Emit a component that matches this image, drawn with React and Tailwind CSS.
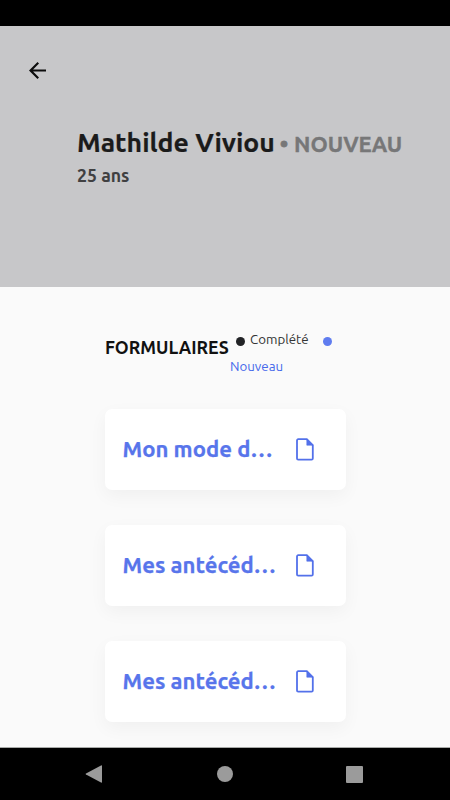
const forms = [
  { id: 1, label: 'Mon mode d…' },
  { id: 2, label: 'Mes antécéd…' },
  { id: 3, label: 'Mes antécéd…' },
];

function BackIcon() {
  return (
    <svg viewBox="4 4 16 16" className="h-[17px] w-[17px]" fill="#0c0c0c">
      <path d="M20 11H7.83l5.59-5.59L12 4l-8 8 8 8 1.41-1.41L7.83 13H20z" />
    </svg>
  );
}

function FileIcon() {
  return (
    <svg viewBox="0 0 18 23" className="h-[23px] w-[18px] shrink-0" fill="none" stroke="#5371ea" strokeWidth="1.8">
      <path d="M2.2 1.2h8.6l6 6v13.2a1.2 1.2 0 0 1-1.2 1.2H2.2A1.2 1.2 0 0 1 1 20.4V2.4a1.2 1.2 0 0 1 1.2-1.2z" />
      <path d="M10.8 1.2v6h6z" fill="#5371ea" strokeWidth="0.6" />
    </svg>
  );
}

function FormCard({ form }) {
  return (
    <button className="flex h-[81px] w-[241px] items-center rounded-[7px] bg-white pl-[17.5px] text-left shadow-[0_6px_18px_rgba(0,0,0,0.045)]">
      <span className="w-[173.5px] whitespace-nowrap pb-px text-[22.1px] font-bold text-[#5875eb] [-webkit-text-stroke:0.25px_#5875eb]">
        {form.label}
      </span>
      <FileIcon />
    </button>
  );
}

export default function App() {
  return (
    <div className="flex h-[800px] w-[450px] flex-col overflow-hidden bg-[#fafafa] font-['Ubuntu','Noto_Sans',sans-serif]">
      <div className="h-[26px] shrink-0 bg-black" />

      <header className="h-[261px] shrink-0 bg-[#c7c7c9] pt-9">
        <button className="ml-[29px] block">
          <BackIcon />
        </button>
        <div className="mt-[45px] flex items-baseline whitespace-nowrap pl-[77px]">
          <h1 className="w-[203px] text-[26.6px] leading-9 font-semibold text-[#1b1b1b] [-webkit-text-stroke:0.2px_#1b1b1b]">
            Mathilde Viviou
          </h1>
          <span className="w-[14px] text-[22px] font-bold text-[#777778] [-webkit-text-stroke:0.8px_#777778]">•</span>
          <span className="text-[22px] font-bold text-[#777778] [-webkit-text-stroke:0.35px_#777778]">NOUVEAU</span>
        </div>
        <p className="pl-[77px] text-[17.7px] leading-[32px] font-semibold text-[#404041]">25 ans</p>
      </header>

      <main className="flex min-h-0 grow flex-col pl-[105px]">
        <div className="flex h-[122px] items-center">
          <h2 className="w-[125px] whitespace-nowrap text-[17.7px] font-bold text-[#111]">FORMULAIRES</h2>
          <div className="pt-[10px] text-[13.3px] leading-[27px]">
            <div className="flex items-center whitespace-nowrap text-[#333]">
              <span className="mt-[3px] mr-[5px] ml-[6px] h-[9px] w-[9px] rounded-full bg-[#222326]" />
              <span className="w-[73px]">Complété</span>
              <span className="mt-[3px] h-[9px] w-[9px] rounded-full bg-[#5f7cef]" />
            </div>
            <div className="text-[#4669eb]">Nouveau</div>
          </div>
        </div>
        <div className="flex flex-col gap-[35px]">
          {forms.map((form) => (
            <FormCard key={form.id} form={form} />
          ))}
        </div>
      </main>

      <nav className="flex h-[53px] shrink-0 items-center border-t border-[#a8aaa8] bg-black pl-[85px]">
        <svg viewBox="0 0 17 18" className="h-[18px] w-[17px]" fill="#9b9b9b">
          <path d="M16 0.5Q17 0 17 1V17Q17 18 16 17.5L1 9.6Q0 9 1 8.4Z" />
        </svg>
        <span className="ml-[115px] h-4 w-4 rounded-full bg-[#9b9b9b]" />
        <span className="ml-[113px] h-[17px] w-[17px] rounded-[1px] bg-[#9b9b9b]" />
      </nav>
    </div>
  );
}
